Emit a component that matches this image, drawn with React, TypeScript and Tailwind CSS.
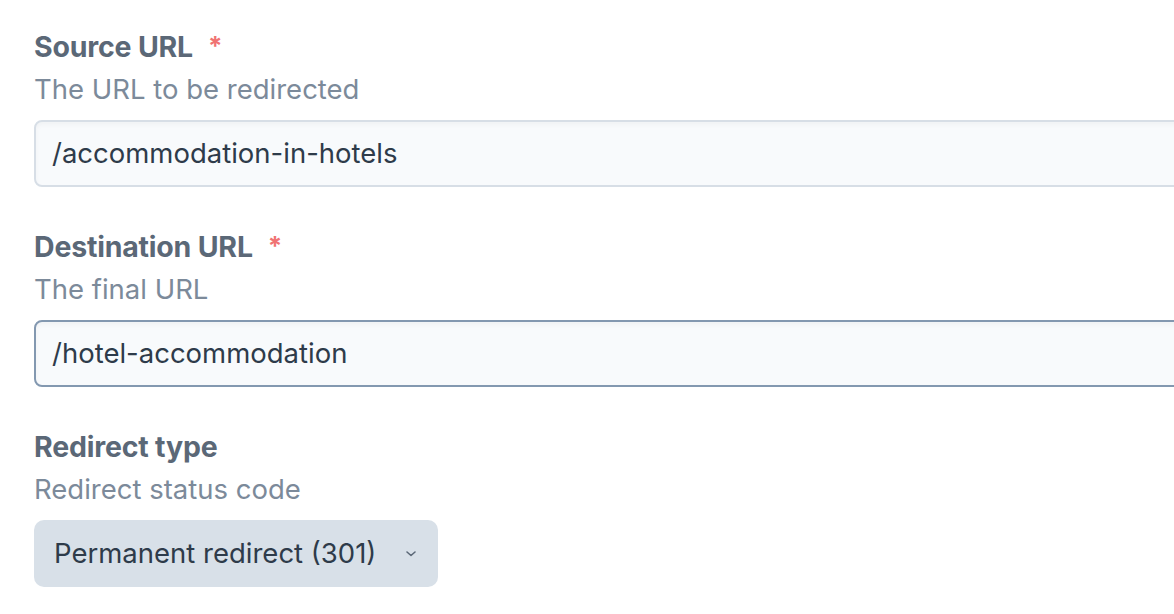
import React from "react";

function Field({
  label,
  required,
  description,
  children,
}: {
  label: string;
  required?: boolean;
  description: string;
  children: React.ReactNode;
}) {
  return (
    <div className="flex flex-col">
      <div className="flex items-center h-[40px] text-[28.5px] font-bold text-[#5b6877] tracking-[-0.2px]">
        <span>{label}</span>
        {required && (
          <span className="ml-[15px] text-[26px] text-[#f07373] leading-none -mt-[2px]">*</span>
        )}
      </div>
      <div className="flex items-center h-[40px] mt-[3px] text-[27.5px] text-[#7c8a9a]">
        {description}
      </div>
      <div className="mt-[10px]">{children}</div>
    </div>
  );
}

export default function App() {
  return (
    <div
      className="w-[1174px] h-[614px] overflow-hidden bg-white pl-[34px] pt-[27px]"
      style={{ fontFamily: "Inter, 'Noto Sans', sans-serif" }}
    >
      <div className="flex flex-col gap-[40px] w-[1200px]">
        <Field label="Source URL" required description="The URL to be redirected">
          <div className="h-[67px] rounded-[8px] border-2 border-[#d7dee6] bg-[#f8fafc] shadow-[inset_0_3px_4px_rgba(0,0,0,0.03)] flex items-center pl-[16px] text-[27.5px] text-[#2e3b4a]">
            /accommodation-in-hotels
          </div>
        </Field>
        <Field label="Destination URL" required description="The final URL">
          <div className="h-[67px] rounded-[8px] border-2 border-[#8398b0] bg-[#f8fafc] shadow-[inset_0_3px_4px_rgba(0,0,0,0.03)] flex items-center pl-[16px] text-[27.5px] text-[#2e3b4a]">
            /hotel-accommodation
          </div>
        </Field>
        <Field label="Redirect type" description="Redirect status code">
          <div className="w-[404px] h-[67px] rounded-[10px] bg-[#d8e0e8] flex items-center pl-[20px] pr-[21px] text-[27.5px] text-[#2e3b4a]">
            <span className="flex-1">Permanent redirect (301)</span>
            <svg width="12" height="8" viewBox="0 0 12 8" fill="none">
              <path d="M2 2l4 3.5L10 2" stroke="#5b6877" strokeWidth="1.6" strokeLinecap="round" strokeLinejoin="round" />
            </svg>
          </div>
        </Field>
      </div>
    </div>
  );
}
